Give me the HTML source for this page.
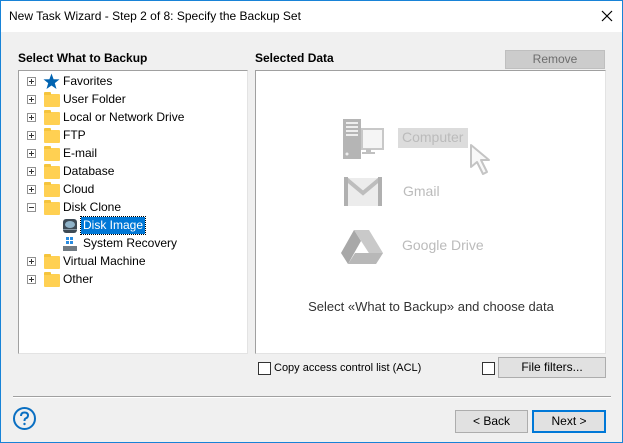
<!DOCTYPE html>
<html><head><meta charset="utf-8"><style>
*{margin:0;padding:0;box-sizing:border-box}
body{width:623px;height:443px;overflow:hidden;font-family:"Liberation Sans",sans-serif;font-size:12px;color:#000;background:#f0f0f0;position:relative}
.win{position:absolute;left:0;top:0;width:623px;height:443px;border:1px solid #1883d7;background:#f0f0f0}
.title{position:absolute;left:0;top:0;width:621px;height:31px;background:#fff;}
.title span{position:absolute;left:8px;top:8px;font-size:12px}
.abs{position:absolute}
.box{position:absolute;background:#fff;border:1px solid #a0a0a0;border-right-color:#e3e3e3;border-bottom-color:#e3e3e3}
.hdr{position:absolute;font-weight:bold;font-size:12px}
.row{position:absolute;height:18px;font-size:12px;line-height:18px}
.exp{position:absolute;width:9px;height:9px;border:1px solid #919191;background:#fff}
.exp:before{content:"";position:absolute;left:1px;top:3px;width:5px;height:1px;background:#333}
.exp.p:after{content:"";position:absolute;left:3px;top:1px;width:1px;height:5px;background:#333}
.fold{position:absolute;width:16px;height:13px;background:#ffd052;border-radius:1px}
.fold:before{content:"";position:absolute;left:0;top:-2px;width:7px;height:3px;background:#f5c43c;border-radius:1px 1px 0 0}
.btn{position:absolute;background:#e1e1e1;border:1px solid #adadad;text-align:center;font-size:12px}
.cb{position:absolute;width:13px;height:13px;border:1px solid #333;background:#fff}
</style></head><body>
<div class="win">
<div class="title"><span>New Task Wizard - Step 2 of 8: Specify the Backup Set</span>
<svg class="abs" style="left:600px;top:9px" width="12" height="12"><path d="M1 1L11 11M11 1L1 11" stroke="#000" stroke-width="1.2"/></svg></div>

<div class="hdr" style="left:17px;top:50px">Select What to Backup</div>
<div class="hdr" style="left:254px;top:50px">Selected Data</div>
<div class="btn" style="left:504px;top:49px;width:100px;height:19px;color:#6d6d6d;line-height:17px;background:#cccccc;border-color:#bfbfbf">Remove</div>

<div class="box" style="left:17px;top:69px;width:230px;height:284px"></div>
<div class="box" style="left:254px;top:69px;width:351px;height:284px"></div>

<div class="exp p" style="left:26px;top:76px"></div>
<svg class="abs" style="left:42px;top:72px" width="17" height="17"><path d="M8.5 0.5L10.6 6.2L16.5 6.4L11.8 10.1L13.5 16L8.5 12.5L3.5 16L5.2 10.1L0.5 6.4L6.4 6.2Z" fill="#0063b1"/></svg>
<div class="row" style="left:62px;top:71px">Favorites</div>

<div class="exp p" style="left:26px;top:94px"></div><div class="fold" style="left:43px;top:93px"></div><div class="row" style="left:62px;top:89px">User Folder</div>
<div class="exp p" style="left:26px;top:112px"></div><div class="fold" style="left:43px;top:111px"></div><div class="row" style="left:62px;top:107px">Local or Network Drive</div>
<div class="exp p" style="left:26px;top:130px"></div><div class="fold" style="left:43px;top:129px"></div><div class="row" style="left:62px;top:125px">FTP</div>
<div class="exp p" style="left:26px;top:148px"></div><div class="fold" style="left:43px;top:147px"></div><div class="row" style="left:62px;top:143px">E-mail</div>
<div class="exp p" style="left:26px;top:166px"></div><div class="fold" style="left:43px;top:165px"></div><div class="row" style="left:62px;top:161px">Database</div>
<div class="exp p" style="left:26px;top:184px"></div><div class="fold" style="left:43px;top:183px"></div><div class="row" style="left:62px;top:179px">Cloud</div>
<div class="exp" style="left:26px;top:202px"></div><div class="fold" style="left:43px;top:201px"></div><div class="row" style="left:62px;top:197px">Disk Clone</div>

<svg class="abs" style="left:61px;top:217px" width="16" height="16"><rect x="1" y="1" width="14" height="14" rx="3" fill="#3d4a55"/><ellipse cx="8" cy="6.5" rx="5" ry="3.5" fill="#8fb3c9"/><rect x="1" y="11" width="14" height="1" fill="#8899a6"/></svg>
<div class="row" style="left:80px;top:216px;background:#0078d7;color:#fff;padding:0 2px;outline:1px dotted #000;height:17px;line-height:17px">Disk Image</div>
<svg class="abs" style="left:61px;top:235px" width="16" height="16"><rect x="4" y="1" width="3" height="3" fill="#2a8ce0"/><rect x="8" y="1" width="3" height="3" fill="#2a8ce0"/><rect x="4" y="5" width="3" height="3" fill="#2a8ce0"/><rect x="8" y="5" width="3" height="3" fill="#2a8ce0"/><rect x="1" y="10" width="14" height="5" fill="#707a82"/></svg>
<div class="row" style="left:82px;top:233px">System Recovery</div>

<div class="exp p" style="left:26px;top:256px"></div><div class="fold" style="left:43px;top:255px"></div><div class="row" style="left:62px;top:251px">Virtual Machine</div>
<div class="exp p" style="left:26px;top:274px"></div><div class="fold" style="left:43px;top:273px"></div><div class="row" style="left:62px;top:269px">Other</div>

<svg class="abs" style="left:340px;top:117px" width="45" height="42"><rect x="2" y="1" width="18" height="40" fill="#b5b5b5"/><rect x="5" y="4" width="12" height="2" fill="#eee"/><rect x="5" y="8" width="12" height="2" fill="#eee"/><rect x="5" y="12" width="12" height="2" fill="#eee"/><rect x="5" y="16" width="12" height="2" fill="#eee"/><circle cx="6" cy="36" r="1.5" fill="#eee"/><rect x="21" y="11" width="21" height="20" fill="#f5f5f5" stroke="#c8c8c8" stroke-width="2"/><rect x="25" y="31" width="5" height="3" fill="#c0c0c0"/><rect x="21" y="34" width="13" height="2" fill="#c0c0c0"/></svg>
<div class="abs" style="left:397px;top:127px;width:70px;height:20px;background:#dcdcdc"></div>
<div class="abs" style="left:401px;top:128px;font-size:14px;color:#bbb">Computer</div>
<svg class="abs" style="left:468px;top:142px" width="30" height="34"><path d="M2 2L2 24L8 19L14 31L18 29L12 17L20 17Z" fill="#f8f8f8" stroke="#c4c4c4" stroke-width="2" stroke-linejoin="round"/></svg>
<svg class="abs" style="left:343px;top:176px" width="38" height="30"><rect x="1" y="1" width="36" height="28" fill="#ececec"/><path d="M1 1L19 16L37 1" fill="none" stroke="#bdbdbd" stroke-width="4"/><rect x="0" y="0" width="4" height="29" fill="#b0b0b0"/><rect x="34" y="0" width="4" height="29" fill="#b0b0b0"/></svg>
<div class="abs" style="left:402px;top:182px;font-size:14px;color:#bbb">Gmail</div>
<svg class="abs" style="left:339px;top:228px" width="44" height="36"><path d="M14 1L29 1L43 24L36 35Z" fill="#c9c9c9"/><path d="M14 1L1 24L8 35L21 12Z" fill="#a8a8a8"/><path d="M8 35L36 35L43 24L15 24Z" fill="#b8b8b8"/></svg>
<div class="abs" style="left:401px;top:236px;font-size:14px;color:#bbb">Google Drive</div>
<div class="abs" style="left:255px;top:298px;width:350px;text-align:center;font-size:13px;color:#333">Select «What to Backup» and choose data</div>

<div class="cb" style="left:257px;top:361px"></div>
<div class="abs" style="left:273px;top:361px;font-size:11px">Copy access control list (ACL)</div>
<div class="cb" style="left:481px;top:361px"></div>
<div class="btn" style="left:497px;top:356px;width:108px;height:21px;line-height:19px">File filters...</div>

<div class="abs" style="left:12px;top:395px;width:598px;height:1px;background:#a0a0a0"></div>
<div class="abs" style="left:12px;top:396px;width:598px;height:1px;background:#fff"></div>

<svg class="abs" style="left:11px;top:405px" width="26" height="26"><circle cx="12.5" cy="12.5" r="10.5" fill="none" stroke="#0a6fc2" stroke-width="2"/><path d="M9 10Q9 6.5 12.5 6.5Q16 6.5 16 9.5Q16 11.5 13.5 12.5Q12.5 13 12.5 15" fill="none" stroke="#0a6fc2" stroke-width="2"/><circle cx="12.5" cy="18" r="1.2" fill="#0a6fc2"/></svg>

<div class="btn" style="left:454px;top:409px;width:73px;height:23px;line-height:21px">&lt; Back</div>
<div class="btn" style="left:531px;top:409px;width:74px;height:23px;line-height:19px;border:2px solid #0078d7">Next &gt;</div>
</div>
</body></html>
